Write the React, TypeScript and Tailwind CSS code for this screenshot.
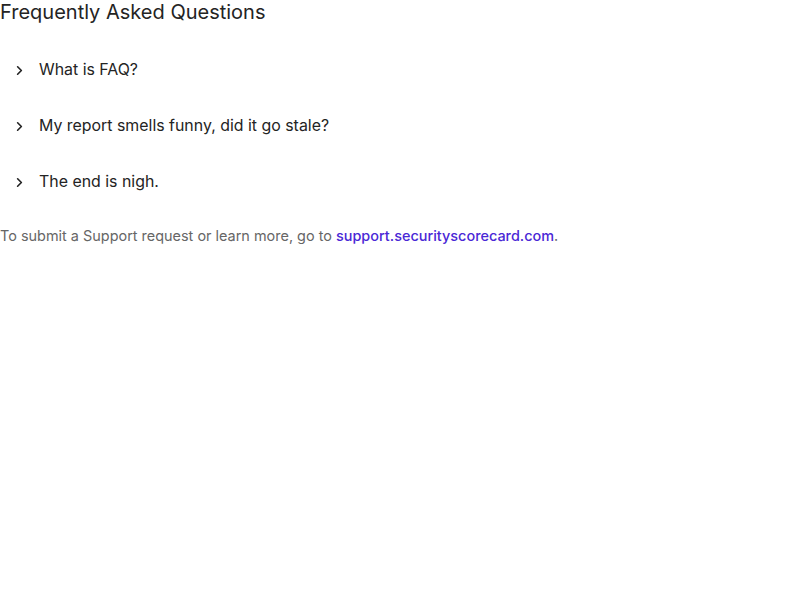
import { ChevronRight } from 'lucide-react'

const questions = ['What is FAQ?', 'My report smells funny, did it go stale?', 'The end is nigh.']

export default function App() {
  return (
    <div className="font-['Inter',sans-serif] text-[#242424]">
      <h2 className="text-[20px] leading-[24px] mb-[18px]">Frequently Asked Questions</h2>
      <ul>
        {questions.map((q) => (
          <li key={q}>
            <button className="flex items-center w-full py-4 text-left">
              <span className="w-[39px] flex justify-center">
                <ChevronRight size={15} strokeWidth={2.6} className="text-[#222]" />
              </span>
              <span className="text-[15.9px] leading-[24px]">{q}</span>
            </button>
          </li>
        ))}
      </ul>
      <p className="mt-[15px] text-[14.45px] leading-[21px] text-[#666]">
        To submit a Support request or learn more, go to{' '}
        <a href="#" className="text-[#4a28d6] font-medium">support.securityscorecard.com</a>.
      </p>
    </div>
  )
}
